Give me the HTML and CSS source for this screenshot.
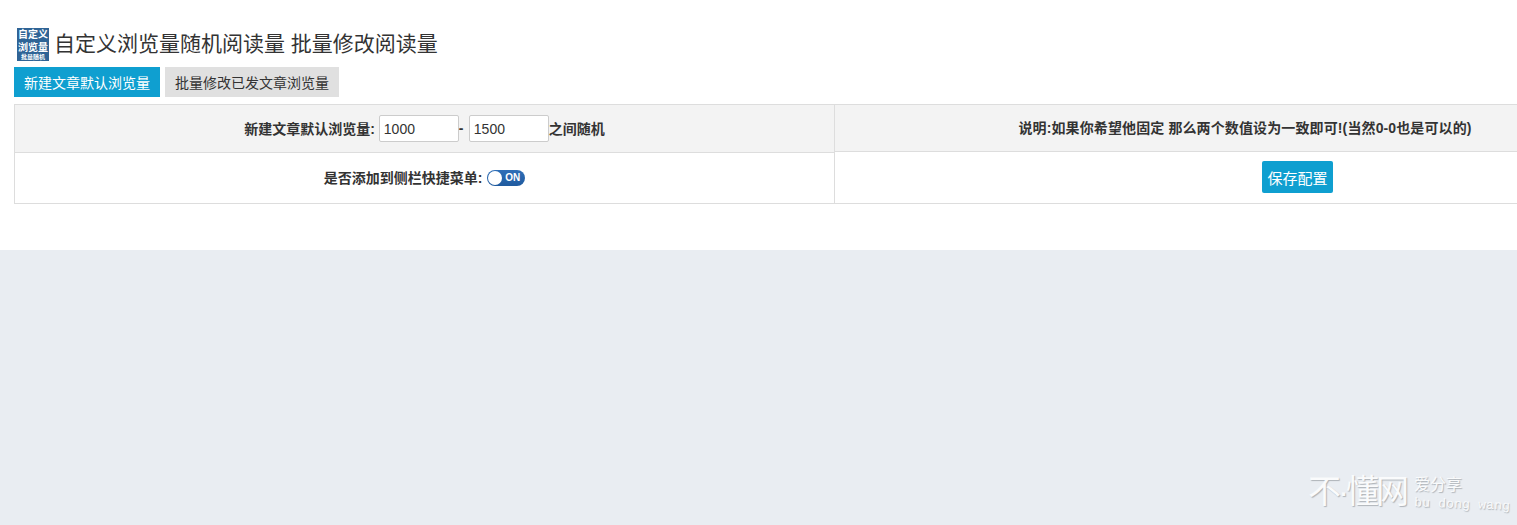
FILE: index.html
```html
<!DOCTYPE html>
<html lang="zh-CN">
<head>
<meta charset="utf-8">
<title>自定义浏览量随机阅读量 批量修改阅读量</title>
<link rel="stylesheet" href="styles.css">
</head>
<body>
<main class="panel">
  <h1 class="title">
    <span class="logo">
      <span class="logo-line">自定义</span>
      <span class="logo-line">浏览量</span>
      <span class="logo-small">批量随机</span>
    </span>
    <span class="title-text">自定义浏览量随机阅读量 批量修改阅读量</span>
  </h1>
  <nav class="tabs">
    <a class="tab tab-active">新建文章默认浏览量</a>
    <a class="tab">批量修改已发文章浏览量</a>
  </nav>
  <section class="settings">
    <div class="col col-left">
      <div class="row row-top-left">
        <b>新建文章默认浏览量:</b>
        <input class="num num-first" type="text" value="1000">
        <b class="dash">-</b>
        <input class="num" type="text" value="1500">
        <b>之间随机</b>
      </div>
      <div class="row row-bottom">
        <b>是否添加到侧栏快捷菜单:</b>
        <span class="switch"><span class="knob"></span><span class="on">ON</span></span>
      </div>
    </div>
    <div class="col col-right">
      <div class="row row-top-right">
        <b class="note">说明:如果你希望他固定 那么两个数值设为一致即可!(当然0-0也是可以的)</b>
      </div>
      <div class="row row-save">
        <button class="save" type="button">保存配置</button>
      </div>
    </div>
  </section>
</main>
<div class="watermark">
  <span class="wm-main">不·懂网</span>
  <span class="wm-side">
    <span class="wm-cn">爱分享</span>
    <span class="wm-en">bu dong wang</span>
  </span>
</div>
</body>
</html>
```
FILE: styles.css
```css
* { box-sizing: border-box; }
html, body { margin: 0; height: 100%; overflow: hidden; }
body {
  background: #e9edf2;
  color: #333;
  font-family: "Liberation Sans", "Noto Sans CJK SC", sans-serif;
  font-size: 14px;
}
.panel {
  height: 250px;
  background: #fff;
  padding: 28px 0 0 14px;
  overflow: hidden;
}
.title {
  display: flex;
  align-items: center;
  gap: 5px;
  height: 33px;
  margin: 0 0 6px 3px;
  font-size: 21px;
  font-weight: 400;
  line-height: 31px;
  white-space: nowrap;
}
.title-text { margin-bottom: 2px; }
.logo {
  width: 32px;
  height: 33px;
  flex: none;
  display: flex;
  flex-direction: column;
  align-items: center;
  background: #2f6496;
  color: #fff;
  font-weight: 700;
  overflow: hidden;
}
.logo-line { font-size: 10px; line-height: 13px; white-space: nowrap; }
.logo-small { font-size: 6px; line-height: 7px; white-space: nowrap; }
.tabs { display: flex; gap: 5px; height: 30px; margin-bottom: 7px; }
.tab {
  padding: 0 10px;
  background: #e0e0e0;
  color: #333;
  font-size: 14px;
  line-height: 32px;
}
.tab-active { background: #0f9fd0; color: #fff; }
.settings {
  display: flex;
  width: 1640px;
  height: 100px;
  border-top: 1px solid #ddd;
  border-bottom: 1px solid #ddd;
  border-left: 1px solid #ddd;
}
.col { flex: none; width: 820px; display: flex; flex-direction: column; }
.col-left { border-right: 1px solid #ddd; }
.row {
  display: flex;
  align-items: center;
  justify-content: center;
  white-space: nowrap;
}
.row b { padding-bottom: 2px; }
.row-top-left { height: 48px; background: #f3f3f3; border-bottom: 1px solid #ddd; }
.row-top-right { height: 47px; background: #f3f3f3; border-bottom: 1px solid #ddd; }
.row-bottom { flex: 1; }
.row-save { flex: 1; justify-content: flex-start; padding-left: 427px; padding-bottom: 1px; }
.note { letter-spacing: 0.12px; }
.num {
  width: 80px;
  height: 27px;
  margin: 0;
  padding: 0 4px;
  border: 1px solid #ccc;
  border-radius: 2px;
  background: #fff;
  color: #333;
  font: 14px "Liberation Sans", sans-serif;
}
.num-first { margin-left: 4px; }
.dash { width: 10px; }
.switch {
  position: relative;
  display: inline-flex;
  align-items: center;
  justify-content: flex-end;
  width: 38px;
  height: 16px;
  margin-left: 5px;
  padding-right: 5px;
  border-radius: 8px;
  background: linear-gradient(#2f6fb8, #1f5a9e);
}
.knob {
  position: absolute;
  left: 1px;
  top: 1px;
  width: 14px;
  height: 14px;
  border-radius: 50%;
  background: #fff;
}
.on { color: #fff; font-size: 10px; font-weight: 700; line-height: 16px; }
.save {
  width: 71px;
  height: 32px;
  padding: 0;
  border: 0;
  border-radius: 2px;
  background: #0f9fd0;
  color: #fff;
  font: 15px "Liberation Sans", "Noto Sans CJK SC", sans-serif;
}
.watermark {
  position: absolute;
  left: 1308px;
  top: 472px;
  display: flex;
  gap: 8px;
  color: #fafbfc;
  text-shadow: 1px 1px 1px #aeb3b8;
  white-space: nowrap;
}
.wm-main { font-size: 33px; line-height: 40px; letter-spacing: -3px; }
.wm-side { display: flex; flex-direction: column; }
.wm-cn { font-size: 16px; line-height: 26px; }
.wm-en { font-family: "Liberation Mono", monospace; font-size: 13px; line-height: 14px; letter-spacing: 0.2px; transform: rotate(2deg); }
```
